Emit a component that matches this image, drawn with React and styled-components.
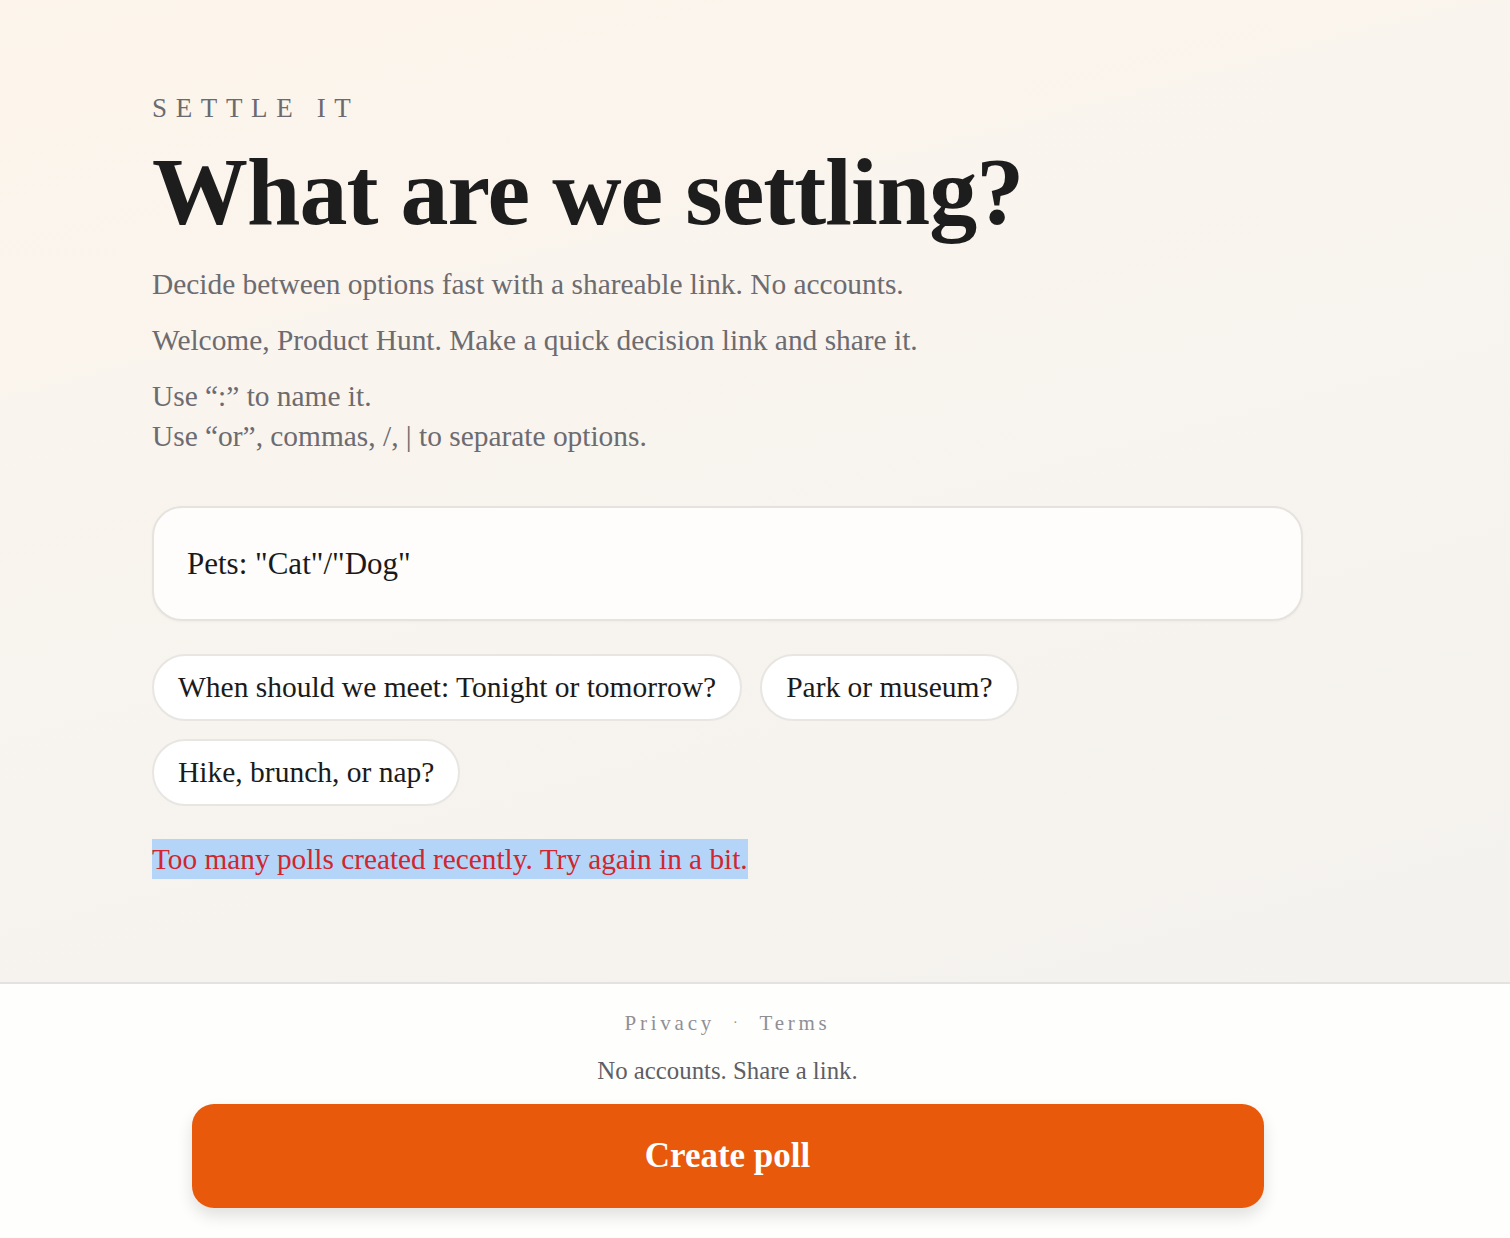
import React, { useState } from "react";
import styled, { createGlobalStyle } from "styled-components";

const GlobalStyle = createGlobalStyle`
  html, body {
    margin: 0;
    padding: 0;
  }
  body {
    font-family: "Liberation Serif", "Times New Roman", serif;
    background: #fefefd;
  }
  * {
    box-sizing: border-box;
  }
`;

const Page = styled.div`
  min-height: 1238px;
  display: flex;
  flex-direction: column;
`;

const Main = styled.main`
  height: 982px;
  background: linear-gradient(165deg, #fdf5eb 0%, #f8f4ee 45%, #f4f2ee 100%);
  padding: 90px 0 0 152px;
`;

const Column = styled.div`
  width: 1151px;
`;

const Eyebrow = styled.div`
  font-size: 27px;
  line-height: 36px;
  letter-spacing: 0.32em;
  color: #6a6a70;
`;

const Title = styled.h1`
  margin: 14px 0 0;
  font-size: 96px;
  line-height: 104px;
  font-weight: 700;
  letter-spacing: -0.01em;
  color: #1d1d1d;
`;

const Lead = styled.p`
  margin: ${(p) => p.$top || 16}px 0 0;
  font-size: 29.4px;
  line-height: 40px;
  color: #6c6b70;
`;

const InputBox = styled.div`
  margin-top: 50px;
  height: 115px;
  border: 2px solid #e6e3df;
  border-radius: 30px;
  background: #fefdfb;
  box-shadow: 0 1px 3px rgba(0, 0, 0, 0.04);
  display: flex;
  align-items: center;
  padding: 0 31px;
`;

const Input = styled.input`
  width: 100%;
  border: none;
  outline: none;
  background: transparent;
  font-family: inherit;
  font-size: 31px;
  color: #1a1a1a;
`;

const Chips = styled.div`
  margin-top: 33px;
  display: flex;
  flex-wrap: wrap;
  gap: 18px;
  width: 900px;
`;

const Chip = styled.button`
  height: 67px;
  padding: 0 24px;
  border-radius: 999px;
  border: 2px solid #e8e6e3;
  background: #ffffff;
  font-family: inherit;
  font-size: 29.5px;
  color: #1b1b1b;
  cursor: pointer;
`;

const ErrorText = styled.p`
  margin: 33px 0 0;
  font-size: 29.3px;
  line-height: 40px;
  color: #d0262d;
`;

const Selected = styled.span`
  display: inline-block;
  line-height: 40px;
  background: #b4d5f8;
`;

const Footer = styled.footer`
  border-top: 2px solid #e4e2e0;
  background: #fefefd;
  padding: 24px 0 30px 152px;
`;

const FooterColumn = styled.div`
  width: 1151px;
  display: flex;
  flex-direction: column;
  align-items: center;
`;

const Links = styled.div`
  display: flex;
  align-items: center;
  gap: 18px;
  font-size: 21px;
  line-height: 30px;
  letter-spacing: 0.18em;
  color: #8f8f95;
`;

const FooterLink = styled.a`
  color: inherit;
  text-decoration: none;
`;

const Dot = styled.span`
  font-size: 14px;
`;

const Note = styled.div`
  margin-top: 18px;
  font-size: 24.8px;
  line-height: 30px;
  color: #5e5e63;
`;

const CreateButton = styled.button`
  margin-top: 18px;
  width: 1072px;
  height: 104px;
  border: none;
  border-radius: 22px;
  background: #e8590c;
  color: #ffffff;
  font-family: inherit;
  font-size: 35px;
  font-weight: 700;
  box-shadow: 0 8px 16px rgba(0, 0, 0, 0.12);
  cursor: pointer;
`;

const examples = [
  "When should we meet: Tonight or tomorrow?",
  "Park or museum?",
  "Hike, brunch, or nap?",
];

export default function App() {
  const [value, setValue] = useState('Pets: "Cat"/"Dog"');

  return (
    <Page>
      <GlobalStyle />
      <Main>
        <Column>
          <Eyebrow>SETTLE IT</Eyebrow>
          <Title>What are we settling?</Title>
          <Lead $top={20}>Decide between options fast with a shareable link. No accounts.</Lead>
          <Lead>Welcome, Product Hunt. Make a quick decision link and share it.</Lead>
          <Lead>
            Use “:” to name it.
            <br />
            Use “or”, commas, /, | to separate options.
          </Lead>
          <InputBox>
            <Input value={value} onChange={(e) => setValue(e.target.value)} />
          </InputBox>
          <Chips>
            {examples.map((text) => (
              <Chip key={text} onClick={() => setValue(text)}>
                {text}
              </Chip>
            ))}
          </Chips>
          <ErrorText>
            <Selected>Too many polls created recently. Try again in a bit.</Selected>
          </ErrorText>
        </Column>
      </Main>
      <Footer>
        <FooterColumn>
          <Links>
            <FooterLink href="#privacy">Privacy</FooterLink>
            <Dot>·</Dot>
            <FooterLink href="#terms">Terms</FooterLink>
          </Links>
          <Note>No accounts. Share a link.</Note>
          <CreateButton>Create poll</CreateButton>
        </FooterColumn>
      </Footer>
    </Page>
  );
}
